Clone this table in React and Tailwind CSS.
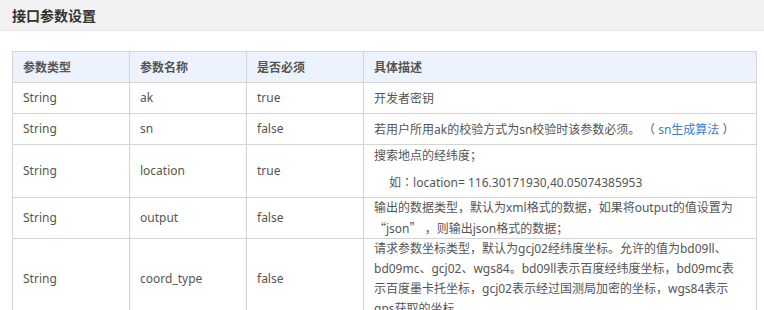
import React from "react";

const font = { fontFamily: '"Noto Sans", "Noto Sans CJK SC", sans-serif' };

function Cell({ children, className = "" }) {
  return (
    <td className={`border border-[#d4d4d4] px-[10px] py-0 align-middle ${className}`}>
      {children}
    </td>
  );
}

function Lines({ lines }) {
  return (
    <div className="flex flex-col">
      {lines.map((l, i) => (
        <div key={i} className="h-[20px] leading-[20px] whitespace-nowrap">
          {l}
        </div>
      ))}
    </div>
  );
}

const cjk = "font-['Noto_Sans_CJK_SC',sans-serif]";
const cjkTc = "font-['Noto_Sans_CJK_TC',sans-serif]";

export default function App() {
  return (
    <div className="w-[764px] h-[310px] overflow-hidden bg-white text-[12px] text-[#555]" style={font}>
      <div className="h-[31px] bg-[#f2f2f2] border-b border-[#e2e2e2] flex items-center px-[12px]">
        <span className="text-[14px] font-bold text-[#333] font-['Noto_Sans_CJK_SC',sans-serif]">接口参数设置</span>
      </div>
      <div className="pt-[20px] pl-[12px]">
        <table className="border-collapse table-fixed w-[744px]">
          <colgroup>
            <col className="w-[117px]" />
            <col className="w-[117px]" />
            <col className="w-[117px]" />
            <col className="w-[393px]" />
          </colgroup>
          <thead>
            <tr className="h-[31px] bg-[#ecf3fd]">
              <Cell className={`font-bold text-[#555] ${cjk}`}>参数类型</Cell>
              <Cell className={`font-bold text-[#555] ${cjk}`}>参数名称</Cell>
              <Cell className={`font-bold text-[#555] ${cjk}`}>是否必须</Cell>
              <Cell className={`font-bold text-[#555] ${cjk}`}>具体描述</Cell>
            </tr>
          </thead>
          <tbody>
            <tr className="h-[31px]">
              <Cell>String</Cell>
              <Cell>ak</Cell>
              <Cell>true</Cell>
              <Cell className={cjk}>开发者密钥</Cell>
            </tr>
            <tr className="h-[31px]">
              <Cell>String</Cell>
              <Cell>sn</Cell>
              <Cell>false</Cell>
              <Cell>
                <span className="whitespace-nowrap">
                  若用户所用ak的校验方式为sn校验时该参数必须。
                  <span className={cjk}>&nbsp;（</span>
                  <span className="text-[#3a7dd1]"> sn生成算法 </span>
                  <span className={cjk}>）</span>
                </span>
              </Cell>
            </tr>
            <tr className="h-[53px]">
              <Cell>String</Cell>
              <Cell>location</Cell>
              <Cell>true</Cell>
              <Cell className="align-top">
                <div className="h-[20px] leading-[20px] mt-[1px] whitespace-nowrap">搜索地点的经纬度；</div>
                <div className="h-[20px] leading-[20px] mt-[6px] pl-[15px] whitespace-nowrap">
                  如<span className={cjkTc}>：</span>location= 116.30171930,40.05074385953
                </div>
              </Cell>
            </tr>
            <tr className="h-[41px]">
              <Cell>String</Cell>
              <Cell>output</Cell>
              <Cell>false</Cell>
              <Cell>
                <Lines
                  lines={[
                    "输出的数据类型，默认为xml格式的数据，如果将output的值设置为",
                    <span key="j">
                      <span className={cjk}>“</span>json<span className={cjk}>”</span> ，则输出json格式的数据；
                    </span>,
                  ]}
                />
              </Cell>
            </tr>
            <tr className="h-[81px]">
              <Cell>String</Cell>
              <Cell>coord_type</Cell>
              <Cell>false</Cell>
              <Cell>
                <Lines
                  lines={[
                    "请求参数坐标类型，默认为gcj02经纬度坐标。允许的值为bd09ll、",
                    "bd09mc、gcj02、wgs84。bd09ll表示百度经纬度坐标，bd09mc表",
                    "示百度墨卡托坐标，gcj02表示经过国测局加密的坐标，wgs84表示",
                    "gps获取的坐标。",
                  ]}
                />
              </Cell>
            </tr>
          </tbody>
        </table>
      </div>
    </div>
  );
}
